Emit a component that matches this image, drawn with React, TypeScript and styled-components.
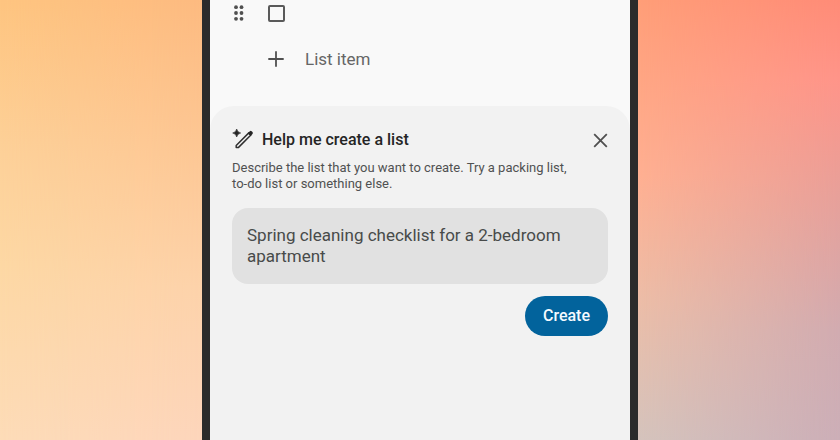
import React, { useState } from "react";
import styled, { createGlobalStyle } from "styled-components";

const GlobalStyle = createGlobalStyle`
  *, *::before, *::after { box-sizing: border-box; }
  body {
    margin: 0;
    font-family: Roboto, "Liberation Sans", sans-serif;
    color: #444746;
  }
  button, input, textarea { font: inherit; color: inherit; }
`;

const Page = styled.main`
  display: grid;
  grid-template-columns: 1fr minmax(0, 436px) 1fr;
  min-height: 100vh;
`;

const Backdrop = styled.div<{ $near: string; $far: string }>`
  display: grid;
  background: linear-gradient(${(p) => p.$near});
  &::after {
    content: "";
    background: linear-gradient(${(p) => p.$far});
    mask-image: linear-gradient(to right, transparent, #000);
  }
`;

const Phone = styled.div`
  display: flex;
  flex-direction: column;
  border: solid #2b2b2b;
  border-width: 0 8px;
  background: #f9f9f9;
`;

const List = styled.ul`
  margin: 0;
  padding: 0 22px 24px;
  list-style: none;
`;

const ListRow = styled.li<{ $first?: boolean }>`
  display: grid;
  grid-template-columns: 14px 16px 1fr;
  column-gap: 22px;
  align-items: center;
  height: ${(p) => (p.$first ? 26 : 46)}px;
  margin-top: ${(p) => (p.$first ? 0 : 10)}px;
  svg { display: block; }
`;

const Check = styled.input`
  appearance: none;
  width: 17px;
  height: 17px;
  margin: 0;
  border: 2px solid #5a5a5a;
  border-radius: 2px;
  &:checked { background: #5a5a5a; }
`;

const AddItem = styled.button`
  grid-column: 2 / -1;
  justify-self: start;
  display: flex;
  align-items: center;
  gap: 21px;
  padding: 0;
  border: 0;
  background: none;
  color: #666;
  font-size: 17px;
  line-height: 22px;
  svg { color: #505050; }
`;

const Sheet = styled.section`
  flex: 1;
  padding: 22px;
  border-radius: 24px 24px 0 0;
  background: #f2f2f2;
`;

const SheetHeader = styled.header`
  display: flex;
  align-items: center;
  gap: 8px;
  height: 24px;
`;

const Title = styled.h1`
  flex: 1;
  margin: 0;
  color: #252525;
  font-size: 16px;
  font-weight: 500;
  line-height: 24px;
`;

const CloseButton = styled.button`
  display: flex;
  padding: 0;
  border: 0;
  background: none;
  color: #505050;
`;

const Hint = styled.label`
  display: block;
  max-width: 350px;
  margin-top: 8px;
  color: #505151;
  font-size: 13px;
  line-height: 16px;
`;

const Prompt = styled.textarea`
  display: block;
  width: 100%;
  height: 76px;
  margin-top: 16px;
  padding: 17px 15px;
  border: 0;
  border-radius: 16px;
  outline: 0;
  resize: none;
  background: #e1e1e1;
  color: #484b4a;
  font-size: 17px;
  line-height: 21px;
`;

const CreateButton = styled.button`
  display: block;
  margin: 12px 0 0 auto;
  padding: 0 18px;
  border: 0;
  border-radius: 20px;
  background: #02639c;
  color: #f5faff;
  font-size: 16px;
  font-weight: 500;
  line-height: 40px;
`;

const DragIcon = () => (
  <svg width="14" height="16" viewBox="0 0 14 16" fill="#505050" aria-hidden="true">
    {[2.2, 8, 13.8].map((y) => (
      <React.Fragment key={y}>
        <circle cx="4" cy={y} r="1.9" />
        <circle cx="9.5" cy={y} r="1.9" />
      </React.Fragment>
    ))}
  </svg>
);

const PlusIcon = () => (
  <svg width="16" height="16" viewBox="0 0 16 16" stroke="currentColor" strokeWidth="1.8" aria-hidden="true">
    <path d="M8 .3v15.4M.3 8h15.4" />
  </svg>
);

const MagicPenIcon = () => (
  <svg width="22" height="22" viewBox="0 0 22 22" aria-hidden="true">
    <path d="M4.7 0Q5.4 3.3 8.7 4 5.4 4.7 4.7 8 4 4.7.7 4 4 3.3 4.7 0Z" fill="#252525" stroke="#252525" strokeWidth=".6" />
    <path d="M4.2 18.6v-2.1L16.8 3.9l2.1 2.1L6.3 18.6Z" fill="none" stroke="#303030" strokeWidth="1.5" strokeLinejoin="round" />
    <path d="m15.8 4.2 2-2q.9-.8 1.8 0l.9.9q.8.9 0 1.8l-2 2Z" fill="#252525" />
  </svg>
);

const CloseIcon = () => (
  <svg width="15" height="15" viewBox="0 0 15 15" stroke="currentColor" strokeWidth="1.8" aria-hidden="true">
    <path d="m1.2 1.2 12.6 12.6M13.8 1.2 1.2 13.8" />
  </svg>
);

export default function App() {
  const [prompt, setPrompt] = useState("Spring cleaning checklist for a 2-bedroom apartment");
  return (
    <>
      <GlobalStyle />
      <Page>
        <Backdrop $near="#fec580, #fdd199 35%, #fdd8a4 60%, #fddcb8" $far="#fdba80, #fdc795 35%, #fdd2aa 65%, #fdd5bb" />
        <Phone>
          <List>
            <ListRow $first>
              <DragIcon />
              <Check type="checkbox" aria-label="Completed" />
            </ListRow>
            <ListRow>
              <AddItem type="button">
                <PlusIcon />
                List item
              </AddItem>
            </ListRow>
          </List>
          <Sheet>
            <SheetHeader>
              <MagicPenIcon />
              <Title>Help me create a list</Title>
              <CloseButton type="button" aria-label="Close">
                <CloseIcon />
              </CloseButton>
            </SheetHeader>
            <Hint htmlFor="prompt">
              Describe the list that you want to create. Try a packing list, to-do list or something else.
            </Hint>
            <Prompt id="prompt" value={prompt} onChange={(e) => setPrompt(e.target.value)} />
            <CreateButton type="button">Create</CreateButton>
          </Sheet>
        </Phone>
        <Backdrop $near="#ff9e78, #ffb092 40%, #edbda7 68%, #d5c4bd" $far="#ff8b77, #ff9489 18%, #e7a09a 45%, #d1abb0 75%, #ccaeb7" />
      </Page>
    </>
  );
}
